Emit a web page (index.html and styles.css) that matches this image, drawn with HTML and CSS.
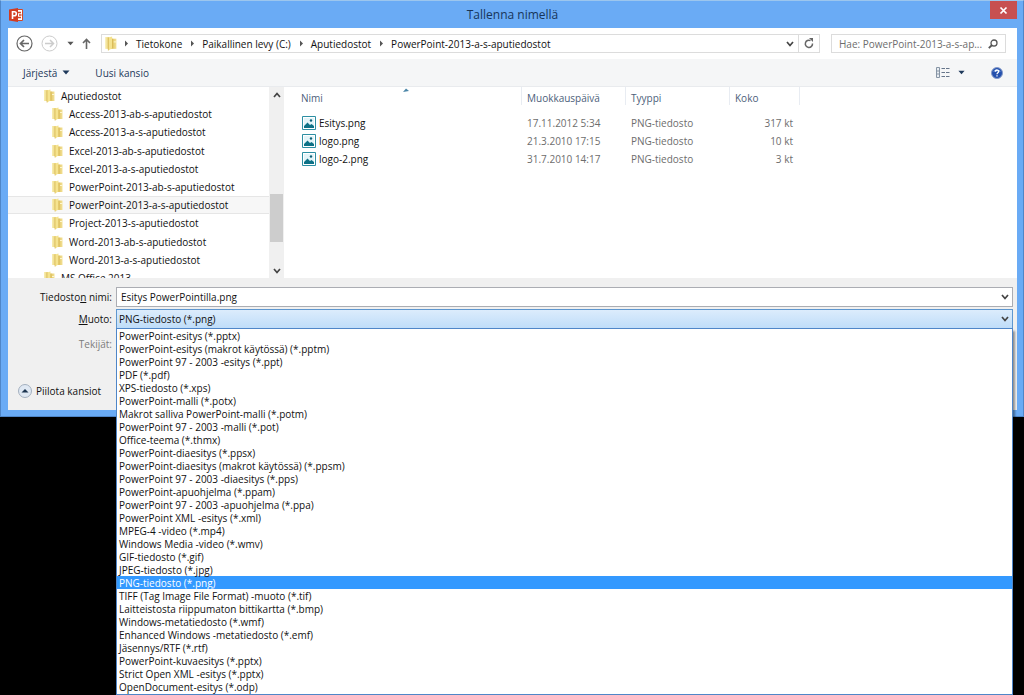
FILE: index.html
```html
<!DOCTYPE html>
<html lang="fi">
<head>
<meta charset="utf-8">
<title>Tallenna nimellä</title>
<link rel="stylesheet" href="styles.css">
</head>
<body>
<svg class="defs" aria-hidden="true">
  <defs>
    <linearGradient id="gold" x1="0" x2="1"><stop offset="0" stop-color="#f9efb4"/><stop offset="1" stop-color="#e8cf70"/></linearGradient>
    <linearGradient id="goldDark" x1="0" x2="1"><stop offset="0" stop-color="#dcbd55"/><stop offset="1" stop-color="#f3e196"/></linearGradient>
    <symbol id="folder" viewBox="0 0 12 14">
      <path d="M1 1h4v11H1z" fill="url(#gold)"/>
      <path d="M6 2.500h5.500V12H6z" fill="url(#goldDark)"/>
      <path d="M4 1.500L7.500.5v11L4 13.500z" fill="#f5e38f"/>
      <path d="M4 1.500v12M8 2.500v9" stroke="#d6b450" stroke-width=".7"/>
      <path d="M9 5.500h2.500" stroke="#fdf6cf"/>
    </symbol>
    <symbol id="picture" viewBox="0 0 14 14">
      <path d="M.5.5h13v13H.5z" fill="#fff" stroke="#2d8fa3"/>
      <path d="M2 2h10v10H2z" fill="#e3f4f8"/>
      <path d="M2 10l3.500-3.500L8 9l1.500-1 2.500 2v2H2z" fill="#0d7186"/>
      <circle cx="9" cy="4.500" r="1.200" fill="#0d5f78"/>
    </symbol>
    <symbol id="chevron" viewBox="0 0 8 6"><path d="M1 1l3 3.500L7 1" fill="none" stroke="#444" stroke-width="1.700"/></symbol>
    <symbol id="caret" viewBox="0 0 8 5"><path d="M.5.5h7L4 4.500z" fill="currentColor"/></symbol>
    <symbol id="crumb" viewBox="0 0 5 7"><path d="M1 .5l3 3-3 3z" fill="#555"/></symbol>
  </defs>
</svg>
<main class="window">
  <header class="titlebar">
    <svg class="app-icon" viewBox="0 0 16 16" aria-hidden="true">
      <path d="M9 2.500h5.500v11H9z" fill="#fff" stroke="#d24726"/>
      <path d="M10 5.500h3M11 8h2.500M10 10.500h3" stroke="#d24726" stroke-width="1.300"/>
      <path d="M1 2.500L10 1v14L1 13.500z" fill="#d23c22"/>
      <path d="M4.500 12V4.800h1.800a1.900 1.900 0 0 1 0 4H4.500" fill="none" stroke="#fff" stroke-width="1.600"/>
    </svg>
    <h1 class="title">Tallenna nimellä</h1>
    <button class="close" aria-label="Sulje"><svg width="9" height="9" viewBox="0 0 9 9"><path d="M1.500 1.500l6 6m0-6l-6 6" stroke="#fff" stroke-width="1.700"/></svg></button>
  </header>
  <div class="content">
    <nav class="navbar" aria-label="Sijainti">
      <div class="history">
        <button class="icon-button" aria-label="Takaisin"><svg width="17" height="17" viewBox="0 0 17 17" fill="none" stroke="#666"><circle cx="8.500" cy="8.500" r="7.500" stroke-width="1.200"/><path d="M13 8.500H5M8 5L4.500 8.500 8 12" stroke-width="1.700"/></svg></button>
        <button class="icon-button" aria-label="Eteenpäin"><svg width="17" height="17" viewBox="0 0 17 17" fill="none" stroke="#ccc"><circle cx="8.500" cy="8.500" r="7.500"/><path d="M4 8.500h8M9 5l3.500 3.500L9 12" stroke-width="1.500"/></svg></button>
        <button class="icon-button recent" aria-label="Viimeisimmät"><svg width="7" height="5"><use href="#caret"/></svg></button>
        <button class="icon-button" aria-label="Ylös"><svg width="9" height="11" viewBox="0 0 9 11"><path d="M4.500 11V2M1 5l3.500-3.500L8 5" fill="none" stroke="#666" stroke-width="1.600"/></svg></button>
      </div>
      <div class="address">
        <svg class="address-folder" width="13" height="15"><use href="#folder"/></svg>
        <ol class="crumbs">
          <li><svg width="5" height="7"><use href="#crumb"/></svg><a href="#">Tietokone</a></li>
          <li><svg width="5" height="7"><use href="#crumb"/></svg><a href="#">Paikallinen levy (C:)</a></li>
          <li><svg width="5" height="7"><use href="#crumb"/></svg><a href="#">Aputiedostot</a></li>
          <li><svg width="5" height="7"><use href="#crumb"/></svg><a href="#">PowerPoint-2013-a-s-aputiedostot</a></li>
        </ol>
        <button class="icon-button address-open" aria-label="Edelliset sijainnit"><svg width="8" height="6"><use href="#chevron"/></svg></button>
        <button class="icon-button refresh" aria-label="Päivitä"><svg width="10" height="11" viewBox="0 0 10 11"><path d="M8.500 5.500A3.600 3.600 0 1 1 6.500 2.600" fill="none" stroke="#666" stroke-width="1.500"/><path d="M5 0h4v4z" fill="#666"/></svg></button>
      </div>
      <div class="search">
        <input type="text" aria-label="Haku" placeholder="Hae: PowerPoint-2013-a-s-ap...">
        <svg width="10" height="10" viewBox="0 0 10 10" fill="none" stroke="#555" aria-hidden="true"><circle cx="6" cy="4" r="3" stroke-width="1.300"/><path d="M4 6L.8 9.200" stroke-width="1.800"/></svg>
      </div>
    </nav>
    <div class="toolbar">
      <button class="command">Järjestä <svg width="8" height="5"><use href="#caret"/></svg></button>
      <button class="command">Uusi kansio</button>
      <button class="icon-button view" aria-label="Näkymä">
        <svg width="14" height="11" viewBox="0 0 14 11"><path d="M.5.5h3v10h-3zM.500 4h3M.5 7h3" fill="#e8edf2" stroke="#8795a5"/><path d="M5.500 1.500h8M5.500 5.500h8M5.500 9.500h8" stroke="#66758a" stroke-dasharray="3.500 1"/></svg>
        <svg class="navy" width="7" height="5"><use href="#caret"/></svg>
      </button>
      <button class="icon-button" aria-label="Ohje"><svg width="12" height="12" viewBox="0 0 12 12"><circle cx="6" cy="6" r="5.500" fill="#2450ad" stroke="#8499c8"/><path d="M2 4.500a4.500 3.500 0 0 1 8 0" fill="#7ea1df"/><path d="M4.300 4.600C4.500 2.400 8 2.600 7.700 4.600 7.500 5.800 6 5.700 6 7.200M6 8.300v1.300" fill="none" stroke="#fff" stroke-width="1.300"/></svg></button>
    </div>
    <div class="browser">
      <div class="sidebar">
        <ul class="tree">
          <li class="parent"><svg width="12" height="14"><use href="#folder"/></svg>Aputiedostot</li>
          <li><svg width="12" height="14"><use href="#folder"/></svg>Access-2013-ab-s-aputiedostot</li>
          <li><svg width="12" height="14"><use href="#folder"/></svg>Access-2013-a-s-aputiedostot</li>
          <li><svg width="12" height="14"><use href="#folder"/></svg>Excel-2013-ab-s-aputiedostot</li>
          <li><svg width="12" height="14"><use href="#folder"/></svg>Excel-2013-a-s-aputiedostot</li>
          <li><svg width="12" height="14"><use href="#folder"/></svg>PowerPoint-2013-ab-s-aputiedostot</li>
          <li class="current"><svg width="12" height="14"><use href="#folder"/></svg>PowerPoint-2013-a-s-aputiedostot</li>
          <li><svg width="12" height="14"><use href="#folder"/></svg>Project-2013-s-aputiedostot</li>
          <li><svg width="12" height="14"><use href="#folder"/></svg>Word-2013-ab-s-aputiedostot</li>
          <li><svg width="12" height="14"><use href="#folder"/></svg>Word-2013-a-s-aputiedostot</li>
          <li class="parent"><svg width="12" height="14"><use href="#folder"/></svg>MS Office 2013</li>
        </ul>
        <div class="scrollbar">
          <button class="icon-button" aria-label="Vieritä ylös"><svg class="flip" width="8" height="6"><use href="#chevron"/></svg></button>
          <div class="track"><div class="thumb"></div></div>
          <button class="icon-button" aria-label="Vieritä alas"><svg width="8" height="6"><use href="#chevron"/></svg></button>
        </div>
      </div>
      <div class="files">
        <table>
          <colgroup><col class="col-name"><col class="col-date"><col class="col-type"><col class="col-size"></colgroup>
          <thead><tr><th class="sorted">Nimi<svg class="sort-mark" width="6" height="4" viewBox="0 0 6 4"><path d="M0 4l3-3.500L6 3z" fill="#4b86a8"/></svg></th><th>Muokkauspäivä</th><th>Tyyppi</th><th>Koko</th></tr></thead>
          <tbody>
            <tr><td><span class="name"><svg width="14" height="14"><use href="#picture"/></svg>Esitys.png</span></td><td>17.11.2012 5:34</td><td>PNG-tiedosto</td><td class="size">317 kt</td></tr>
            <tr><td><span class="name"><svg width="14" height="14"><use href="#picture"/></svg>logo.png</span></td><td>21.3.2010 17:15</td><td>PNG-tiedosto</td><td class="size">10 kt</td></tr>
            <tr><td><span class="name"><svg width="14" height="14"><use href="#picture"/></svg>logo-2.png</span></td><td>31.7.2010 14:17</td><td>PNG-tiedosto</td><td class="size">3 kt</td></tr>
          </tbody>
        </table>
      </div>
    </div>
    <form class="details">
      <div class="field">
        <label for="filename">Tiedosto<u>n</u> nimi:</label>
        <div class="combo"><input id="filename" type="text" value="Esitys PowerPointilla.png"><svg width="8" height="6"><use href="#chevron"/></svg></div>
      </div>
      <div class="field">
        <label for="format"><u>M</u>uoto:</label>
        <div class="combo open">
          <select id="format"><option>PNG-tiedosto (*.png)</option></select><svg width="8" height="6"><use href="#chevron"/></svg>
          <ul class="options" role="listbox" aria-label="Muoto">
            <li role="option">PowerPoint-esitys (*.pptx)</li>
            <li role="option">PowerPoint-esitys (makrot käytössä) (*.pptm)</li>
            <li role="option">PowerPoint 97 - 2003 -esitys (*.ppt)</li>
            <li role="option">PDF (*.pdf)</li>
            <li role="option">XPS-tiedosto (*.xps)</li>
            <li role="option">PowerPoint-malli (*.potx)</li>
            <li role="option">Makrot salliva PowerPoint-malli (*.potm)</li>
            <li role="option">PowerPoint 97 - 2003 -malli (*.pot)</li>
            <li role="option">Office-teema (*.thmx)</li>
            <li role="option">PowerPoint-diaesitys (*.ppsx)</li>
            <li role="option">PowerPoint-diaesitys (makrot käytössä) (*.ppsm)</li>
            <li role="option">PowerPoint 97 - 2003 -diaesitys (*.pps)</li>
            <li role="option">PowerPoint-apuohjelma (*.ppam)</li>
            <li role="option">PowerPoint 97 - 2003 -apuohjelma (*.ppa)</li>
            <li role="option">PowerPoint XML -esitys (*.xml)</li>
            <li role="option">MPEG-4 -video (*.mp4)</li>
            <li role="option">Windows Media -video (*.wmv)</li>
            <li role="option">GIF-tiedosto (*.gif)</li>
            <li role="option">JPEG-tiedosto (*.jpg)</li>
            <li role="option" class="selected" aria-selected="true">PNG-tiedosto (*.png)</li>
            <li role="option">TIFF (Tag Image File Format) -muoto (*.tif)</li>
            <li role="option">Laitteistosta riippumaton bittikartta (*.bmp)</li>
            <li role="option">Windows-metatiedosto (*.wmf)</li>
            <li role="option">Enhanced Windows -metatiedosto (*.emf)</li>
            <li role="option">Jäsennys/RTF (*.rtf)</li>
            <li role="option">PowerPoint-kuvaesitys (*.pptx)</li>
            <li role="option">Strict Open XML -esitys (*.pptx)</li>
            <li role="option">OpenDocument-esitys (*.odp)</li>
          </ul>
        </div>
      </div>
      <div class="field authors"><span class="label">Tekijät:</span></div>
      <button type="button" class="hide-folders"><svg width="14" height="14" viewBox="0 0 14 14"><circle cx="7" cy="7" r="6.500" fill="#dfe8f3" stroke="#a3afbe"/><path d="M3.500 8.500L7 5l3.500 3.500z" fill="#1c3450"/></svg>Piilota kansiot</button>
    </form>
  </div>
</main>
</body>
</html>
```

FILE: styles.css
```css
* { box-sizing: border-box; }
body {
  margin: 0;
  min-height: 100vh;
  overflow: hidden;
  background: #000;
  color: #111;
  font: 10px/14px "Open Sans", "Noto Sans", sans-serif;
}
svg { flex: none; display: block; }
.defs { position: absolute; width: 0; height: 0; }
button, input, select { font: inherit; color: inherit; margin: 0; padding: 0; border: 0; background: none; }
ul, ol { list-style: none; margin: 0; padding: 0; }
a { color: inherit; text-decoration: none; }

.window {
  padding: 0 6px 6px 7px;
  background: #6aabf5;
  border: 1px solid #4f86c8;
  border-top-color: #9cc6ee;
}
.titlebar { display: grid; grid-template-columns: 27px 1fr 27px; height: 27px; align-items: center; }
.app-icon { width: 16px; height: 16px; }
.title { margin: 0; font-size: 12px; line-height: 16px; font-weight: 400; text-align: center; color: #17355a; }
.close { align-self: start; height: 18px; background: #c75050; display: grid; place-items: center; }

.content { background: #fff; }
.icon-button { display: flex; align-items: center; justify-content: center; color: #555; }
.navbar { display: flex; align-items: center; height: 31px; padding: 0 11px 0 8px; }
.history { display: flex; align-items: center; gap: 8px; width: 85px; }
.recent { width: 8px; }
.address { flex: 1; display: flex; align-items: center; height: 19px; border: 1px solid #dcdcdc; padding-left: 2px; }
.crumbs { flex: 1; display: flex; gap: 8px; padding-left: 7px; }
.crumbs li { display: flex; align-items: center; gap: 7px; white-space: nowrap; }
.address-open { width: 17px; height: 17px; }
.refresh { width: 21px; height: 17px; border-left: 1px solid #dcdcdc; }
.search { display: flex; align-items: center; width: 175px; height: 19px; margin-left: 11px; padding: 0 7px; border: 1px solid #dcdcdc; }
.search input { flex: 1; min-width: 0; outline: 0; appearance: none; }
.search input::placeholder { color: #6d6d6d; opacity: 1; }

.toolbar { display: flex; align-items: center; height: 28px; padding: 0 14px 0 15px; background: #f5f6f7; border-bottom: 1px solid #e9ebee; color: #1e395b; }
.command { display: flex; align-items: center; gap: 5px; margin-right: 25px; }
.view { margin-left: auto; margin-right: 26px; gap: 8px; }
.navy { color: #1e395b; }

.browser { display: flex; height: 191px; overflow: hidden; }
.sidebar { display: flex; width: 276px; }
.tree { flex: 1; display: grid; grid-auto-rows: 1fr; height: 200px; }
.tree li { display: flex; align-items: center; gap: 6px; padding-left: 43px; white-space: nowrap; border: 1px solid transparent; border-left: 0; border-right: 0; }
.tree .parent { padding-left: 35px; }
.tree .current { background: #f7f7f7; border-color: #e6e6e6; }
.scrollbar { display: flex; flex-direction: column; width: 15px; background: #f0f0f0; }
.scrollbar .icon-button { height: 15px; }
.flip { transform: scaleY(-1); }
.track { flex: 1; display: grid; grid-template-rows: 92px 48px; }
.thumb { grid-row: 2; background: #cdcdcd; margin: 0 1px; }
.files { flex: 1; padding-left: 11px; }
table { border-collapse: separate; border-spacing: 0; table-layout: fixed; width: 505px; }
.col-name { width: 227px; }
.col-date, .col-type { width: 104px; }
.col-size { width: 70px; }
th { height: 17px; padding: 4px 5px 0; font-weight: 400; text-align: left; color: #4c607a; border-right: 1px solid #e8ecf2; }
th:first-child { padding-left: 6px; }
.sorted { position: relative; }
.sort-mark { position: absolute; top: 1px; left: 48%; }
td { height: 18px; padding: 0 5px; color: #6d6d6d; }
td:first-child { padding-left: 7px; }
tbody::before { content: ""; display: block; height: 9px; }
.name { display: flex; align-items: center; gap: 3px; color: #111; }
.size { text-align: right; padding-right: 7px; }

.details { padding: 9px 4px 12px 8px; background: #f0f0f0; }
.field { display: grid; grid-template-columns: 97px 1fr; gap: 3px; align-items: center; margin-bottom: 2px; }
.field label, .label { text-align: right; padding-right: 1px; white-space: nowrap; }
.combo { position: relative; display: flex; align-items: center; height: 20px; padding: 0 3px 0 4px; background: #fff; border: 1px solid #abadb3; }
.combo input, .combo select { flex: 1; min-width: 0; outline: 0; appearance: none; }
.combo.open { padding-left: 2px; background: linear-gradient(#dcecfc, #bfddf9); border-color: #5f97cf; }
.options { position: absolute; top: 18px; left: -1px; right: -1px; padding-bottom: 1px; background: #fff; border: 1px solid #4f86c8; box-shadow: 2px 3px 2px rgba(0, 0, 0, .4); }
.options li { height: 13px; line-height: 15px; padding-left: 2px; white-space: nowrap; }
.options .selected { background: #3399ff; color: #fff; }
.authors { color: #7d7d7d; padding-top: 6px; margin-bottom: 33px; }
.hide-folders { display: flex; align-items: center; gap: 4px; margin-left: 2px; }
```
